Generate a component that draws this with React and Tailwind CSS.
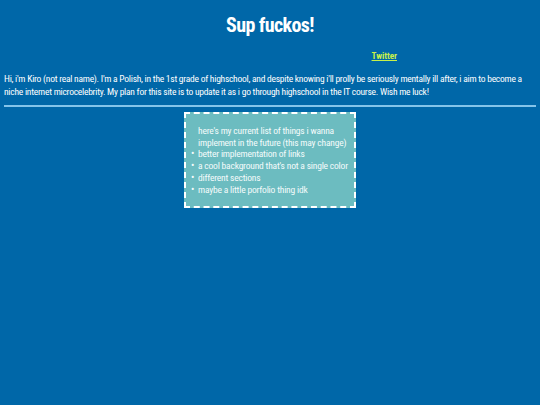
const items = [
  "better implementation of links",
  "a cool background that's not a single color",
  "different sections",
  "maybe a little porfolio thing idk",
];

export default function App() {
  return (
    <div className="min-h-[405px] w-full bg-[#0067a8] text-white px-[4px] pt-[12px] font-['Roboto_Condensed','Liberation_Sans_Narrow',sans-serif]">
      <h1 className="text-center text-[20px] font-bold leading-[26px] tracking-[-0.6px]">Sup fuckos!</h1>
      <div className="flex justify-end pr-[139px] mt-[12px]">
        <a href="#" className="text-[9px] font-bold underline text-[#c8f048] leading-[12px]">Twitter</a>
      </div>
      <p className="text-[9.5px] leading-[13px] tracking-[-0.25px] mt-[10px]">
        Hi, i'm Kiro (not real name). I'm a Polish, in the 1st grade of highschool, and despite knowing i'll prolly be seriously mentally ill after, i aim to become a niche internet microcelebrity. My plan for this site is to update it as i go through highschool in the IT course. Wish me luck!
      </p>
      <div className="h-[2px] bg-[#84c4ea] mt-[7px]"></div>
      <div className="flex justify-center mt-[5px]">
        <div className="w-[172px] bg-[#6cbcc0] border-2 border-dashed border-white pt-[11px] pb-[11px] pl-[5px] pr-[4px] text-[9.5px] leading-[11.7px] tracking-[-0.2px] text-[#f4fbfb]">
          <div className="pl-[7px]">here's my current list of things i wanna implement in the future (this may change)</div>
          <ul>
            {items.map((t) => (
              <li key={t} className="flex">
                <span className="w-[7px] shrink-0 text-[10px] leading-[11.7px]">•</span>
                <span>{t}</span>
              </li>
            ))}
          </ul>
        </div>
      </div>
    </div>
  );
}
